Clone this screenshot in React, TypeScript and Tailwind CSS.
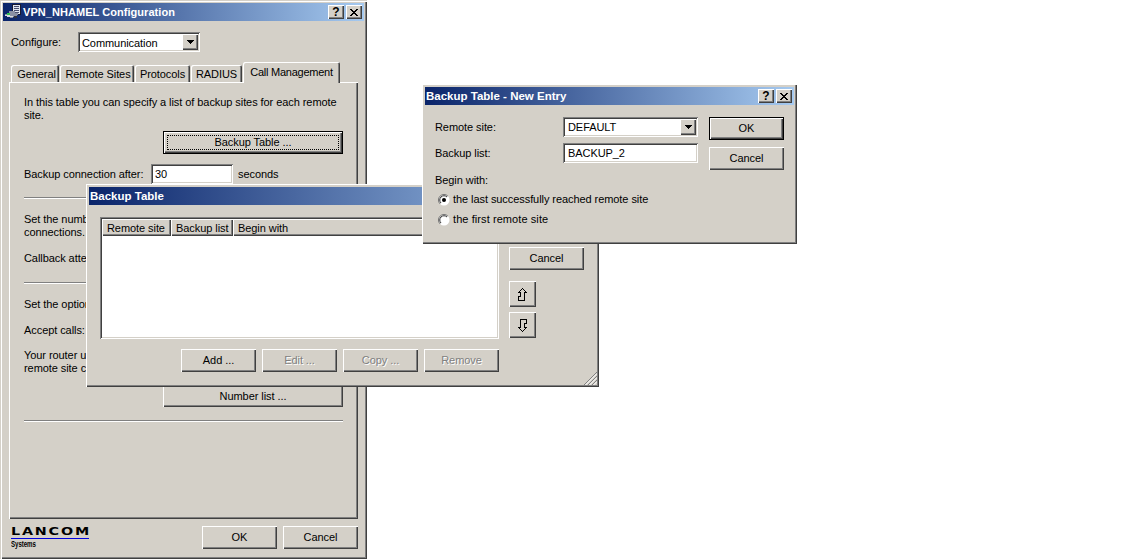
const ui = "[font-family:'Liberation_Sans',Arial,sans-serif] text-[11px] leading-[13px] tracking-[-0.07px] text-black";
const raised = "bg-[#d4d0c8] shadow-[inset_1px_1px_0_#fff,inset_-1px_-1px_0_#404040,inset_-2px_-2px_0_#808080]";
const sunken = "bg-white shadow-[inset_1px_1px_0_#808080,inset_-1px_-1px_0_#fff,inset_2px_2px_0_#404040,inset_-2px_-2px_0_#d4d0c8]";
const frame = "bg-[#d4d0c8] shadow-[inset_1px_1px_0_#fff,inset_-1px_-1px_0_#404040,inset_-2px_-2px_0_#808080]";
const mainFrame = "bg-[#d4d0c8] shadow-[inset_1px_1px_0_#d4d0c8,inset_2px_2px_0_#fff,inset_-1px_-1px_0_#404040,inset_-2px_-2px_0_#808080]";

const Button = ({ label, disabled, className }: { label: string; disabled?: boolean; className?: string }) => (
  <div className={`flex shrink-0 items-center justify-center ${raised} ${disabled ? "text-[#808080] [text-shadow:1px_1px_0_#fff]" : ""} ${className ?? "h-[23px] w-[75px]"}`}>
    {label}
  </div>
);

const TitleButton = ({ children }: { children: React.ReactNode }) => (
  <div className={`flex h-[14px] w-[16px] items-center justify-center ${raised}`}>{children}</div>
);

const TitleBar = ({ title, controls, icon, textClass }: { title: string; controls?: boolean; icon?: boolean; textClass?: string }) => (
  <div className={`flex h-[18px] shrink-0 items-center bg-[linear-gradient(90deg,#0a246a,#a6caf0)] pr-[2px] ${icon ? "pl-[2px]" : "pl-[1px]"}`}>
    {icon && <AppIcon />}
    <span className={`font-bold text-white ${textClass ?? "text-[11.5px] tracking-normal"}`}>{title}</span>
    {controls && (
      <div className="ml-auto flex gap-[2px]">
        <TitleButton>
          <span className="text-[12px] font-bold leading-none">?</span>
        </TitleButton>
        <TitleButton>
          <svg width="8" height="7" viewBox="0 0 8 7" shapeRendering="crispEdges">
            <path d="M0 0h2v1h1v1h2V1h1V0h2v1H7v1H6v1H5v1h1v1h1v1h1v1H6V6H5V5H3v1H2v1H0V6h1V5h1V4h1V3H2V2H1V1H0z" fill="#000" />
          </svg>
        </TitleButton>
      </div>
    )}
  </div>
);

const AppIcon = () => (
  <svg width="17" height="16" viewBox="0 0 17 16" shapeRendering="crispEdges" className="mr-px shrink-0">
    <rect x="7.5" y="0.5" width="8" height="10" fill="#dfe3ee" stroke="#1a1a30" />
    <path d="M9 2.5h5M9 4.5h5M9 6.5h5M9 8.5h5" stroke="#4a5070" />
    <path d="M4 7h6v2h3v2h-1v2H8v1H5v-1H2v-1H0v-2h2V9h2z" fill="#8a90a4" />
    <path d="M0 11h5v1h3v1H2v-1H0z" fill="#d8dae0" />
    <rect x="2" y="9" width="3" height="2" fill="#30c050" />
    <rect x="9" y="12" width="3" height="2" fill="#30303a" />
  </svg>
);

const ComboArrow = () => (
  <div className={`flex h-[16px] w-[16px] shrink-0 items-center justify-center ${raised}`}>
    <svg width="7" height="4" viewBox="0 0 7 4" shapeRendering="crispEdges">
      <path d="M0 0h7v1H6v1H5v1H4v1H3V3H2V2H1V1H0z" fill="#000" />
    </svg>
  </div>
);

const Combo = ({ value, className, valueClass }: { value: string; className: string; valueClass?: string }) => (
  <div className={`flex h-[20px] items-center justify-between py-[2px] pr-[2px] ${sunken} ${className}`}>
    <span className={valueClass}>{value}</span>
    <ComboArrow />
  </div>
);

const Input = ({ value, className }: { value: string; className: string }) => (
  <div className={`flex h-[20px] items-center ${sunken} ${className}`}>{value}</div>
);

const Separator = ({ className }: { className?: string }) => (
  <div className={`h-[2px] border-t border-b border-t-[#808080] border-b-white ${className ?? ""}`} />
);

const Tab = ({ label, active, className }: { label: string; active?: boolean; className: string }) => (
  <div
    className={`flex items-center justify-center rounded-t-[2px] bg-[#d4d0c8] shadow-[inset_1px_1px_0_#fff,inset_-1px_0_0_#404040,inset_-2px_0_0_#808080] ${active ? "relative z-10 -mb-px h-[21px]" : "h-[17px] pt-px"} ${className}`}
  >
    {label}
  </div>
);

const Radio = ({ checked }: { checked?: boolean }) => (
  <svg width="12" height="12" viewBox="0 0 12 12" className="shrink-0">
    <circle cx="6" cy="6" r="5.5" fill="#fff" />
    <path d="M2.1 9.9A5.5 5.5 0 0 1 9.9 2.1" fill="none" stroke="#707070" strokeWidth="1" />
    <path d="M3 9A4.2 4.2 0 0 1 9 3" fill="none" stroke="#303030" strokeWidth="1" />
    {checked && <circle cx="6" cy="6" r="2" fill="#000" />}
  </svg>
);

const ArrowUp = ({ className }: { className?: string }) => (
  <svg width="9" height="13" viewBox="0 0 9 13" className={className}>
    <path d="M4.5 .5L8.5 4.5H6.5V12.5H.5V8.5H2.5V4.5H.5Z" fill="none" stroke="#000" shapeRendering="crispEdges" />
  </svg>
);

const ResizeGrip = () => (
  <svg width="13" height="13" viewBox="0 0 13 13" className="absolute bottom-[2px] right-[2px]">
    <path d="M13 0L0 13M13 4L4 13M13 8L8 13" fill="none" stroke="#808080" />
    <path d="M13 1.5L1.5 13M13 5.5L5.5 13M13 9.5L9.5 13" fill="none" stroke="#fff" />
  </svg>
);

const ColumnHead = ({ label, className }: { label: string; className: string }) => (
  <div className={`flex h-[17px] shrink-0 items-center pl-[5px] pt-px ${raised} ${className}`}>{label}</div>
);

const MainWindow = () => (
  <div className={`absolute left-0 top-0 flex h-[559px] w-[367px] flex-col p-[3px] ${mainFrame}`}>
    <TitleBar title="VPN_NHAMEL Configuration" controls icon textClass="text-[11px] tracking-[0.05px]" />
    <div className="mt-[11px] flex items-center pl-[8px]">
      <span className="w-[67px]">Configure:</span>
      <Combo value="Communication" className="w-[122px] pl-[4px]" valueClass="pt-[2px]" />
    </div>
    <div className="mt-[10px] flex h-[20px] items-end gap-px pl-[8px]">
      <Tab label="General" className="w-[48px] pl-[3px]" />
      <Tab label="Remote Sites" className="w-[74px] pl-[2px]" />
      <Tab label="Protocols" className="w-[55px]" />
      <Tab label="RADIUS" className="w-[51px]" />
      <Tab label="Call Management" active className="w-[97px] tracking-[-0.25px]" />
    </div>
    <div className="ml-[6px] flex h-[437px] w-[349px] flex-col pl-[15px] pr-[15px] pt-[14px] shadow-[inset_1px_1px_0_#fff,inset_-1px_-1px_0_#404040,inset_-2px_-2px_0_#808080]">
      <p>
        In this table you can specify a list of backup sites for each remote
        <br />
        site.
      </p>
      <Button label="Backup Table ..." className="relative mt-[9px] h-[23px] w-[180px] self-end border border-black after:absolute after:inset-[3px] after:border after:border-dotted after:border-black" />
      <div className="mt-[10px] flex items-center">
        <span className="w-[127px] pt-px">Backup connection after:</span>
        <Input value="30" className="w-[82px] pl-[4px] pt-px" />
        <span className="ml-[5px] pt-px">seconds</span>
      </div>
      <Separator className="mt-[13px]" />
      <p className="mt-[14px]">
        Set the number of callback attempts for incoming
        <br />
        connections.
      </p>
      <div className="mt-[9px] flex h-[20px] items-center">Callback attempts:</div>
      <Separator className="mt-[14px]" />
      <p className="mt-[14px]">Set the options for incoming calls.</p>
      <div className="mt-[9px] flex h-[20px] items-center">Accept calls:</div>
      <p className="mt-[9px]">
        Your router uses this number list to identify the
        <br />
        remote site calling in.
      </p>
      <Button label="Number list ..." className="mt-[9px] h-[23px] w-[180px] self-end pt-px" />
      <Separator className="mt-[13px]" />
    </div>
    <div className="mt-[7px] flex items-start pl-[8px] pr-[6px]">
      <div className="flex w-[78px] flex-col">
        <span className="inline-block h-[11px] origin-left scale-x-[1.3] whitespace-nowrap [font-family:'DejaVu_Sans',sans-serif] text-[11px] font-bold leading-[11px] tracking-[1.4px]">LANCOM</span>
        <div className="mt-px h-px bg-[#0000e0]" />
        <span className="mt-px inline-block origin-left scale-x-[0.68] whitespace-nowrap text-[9px] font-bold leading-[9px]">Systems</span>
      </div>
      <div className="ml-auto flex gap-[6px]">
        <Button label="OK" />
        <Button label="Cancel" />
      </div>
    </div>
  </div>
);

const TableWindow = () => (
  <div className={`absolute left-[86px] top-[184px] flex h-[203px] w-[513px] flex-col p-[3px] ${frame}`}>
    <TitleBar title="Backup Table" />
    <div className="flex pl-[11px] pt-[12px]">
      <div className="flex w-[399px] flex-col">
        <div className={`flex h-[122px] flex-col p-[2px] ${sunken}`}>
          <div className="flex overflow-hidden">
            <ColumnHead label="Remote site" className="w-[69px]" />
            <ColumnHead label="Backup list" className="w-[62px]" />
            <ColumnHead label="Begin with" className="flex-1" />
          </div>
        </div>
        <div className="mt-[10px] flex justify-end gap-[6px]">
          <Button label="Add ..." />
          <Button label="Edit ..." disabled />
          <Button label="Copy ..." disabled />
          <Button label="Remove" disabled />
        </div>
      </div>
      <div className="ml-[10px] flex flex-col">
        <Button label="OK" />
        <Button label="Cancel" className="mt-[7px] h-[23px] w-[75px]" />
        <div className={`mt-[11px] flex h-[26px] w-[27px] items-center justify-center ${raised}`}>
          <ArrowUp />
        </div>
        <div className={`mt-[5px] flex h-[26px] w-[27px] items-center justify-center ${raised}`}>
          <ArrowUp className="rotate-180" />
        </div>
      </div>
    </div>
    <ResizeGrip />
  </div>
);

const EntryWindow = () => (
  <div className={`absolute left-[422px] top-[84px] flex h-[160px] w-[375px] flex-col p-[3px] ${frame}`}>
    <TitleBar title="Backup Table - New Entry" controls />
    <div className="flex pl-[10px] pt-[12px]">
      <div className="flex w-[263px] flex-col">
        <div className="flex items-center">
          <span className="w-[128px] pt-px">Remote site:</span>
          <Combo value="DEFAULT" className="w-[135px] pl-[5px]" />
        </div>
        <div className="mt-[6px] flex items-center">
          <span className="w-[128px] pt-px">Backup list:</span>
          <Input value="BACKUP_2" className="w-[135px] pl-[5px]" />
        </div>
        <span className="mt-[11px]">Begin with:</span>
        <div className="mt-[6px] flex items-center gap-[3px] pl-[3px]">
          <Radio checked />
          <span>the last successfully reached remote site</span>
        </div>
        <div className="mt-[7px] flex items-center gap-[3px] pl-[3px]">
          <Radio />
          <span className="tracking-[0.08px]">the first remote site</span>
        </div>
      </div>
      <div className="ml-[11px] flex flex-col">
        <Button label="OK" className="h-[23px] w-[75px] border border-black" />
        <Button label="Cancel" className="mt-[7px] h-[23px] w-[75px]" />
      </div>
    </div>
  </div>
);

export default function App() {
  return (
    <div className={`relative h-[559px] w-[1134px] overflow-hidden bg-white ${ui}`}>
      <MainWindow />
      <TableWindow />
      <EntryWindow />
    </div>
  );
}
